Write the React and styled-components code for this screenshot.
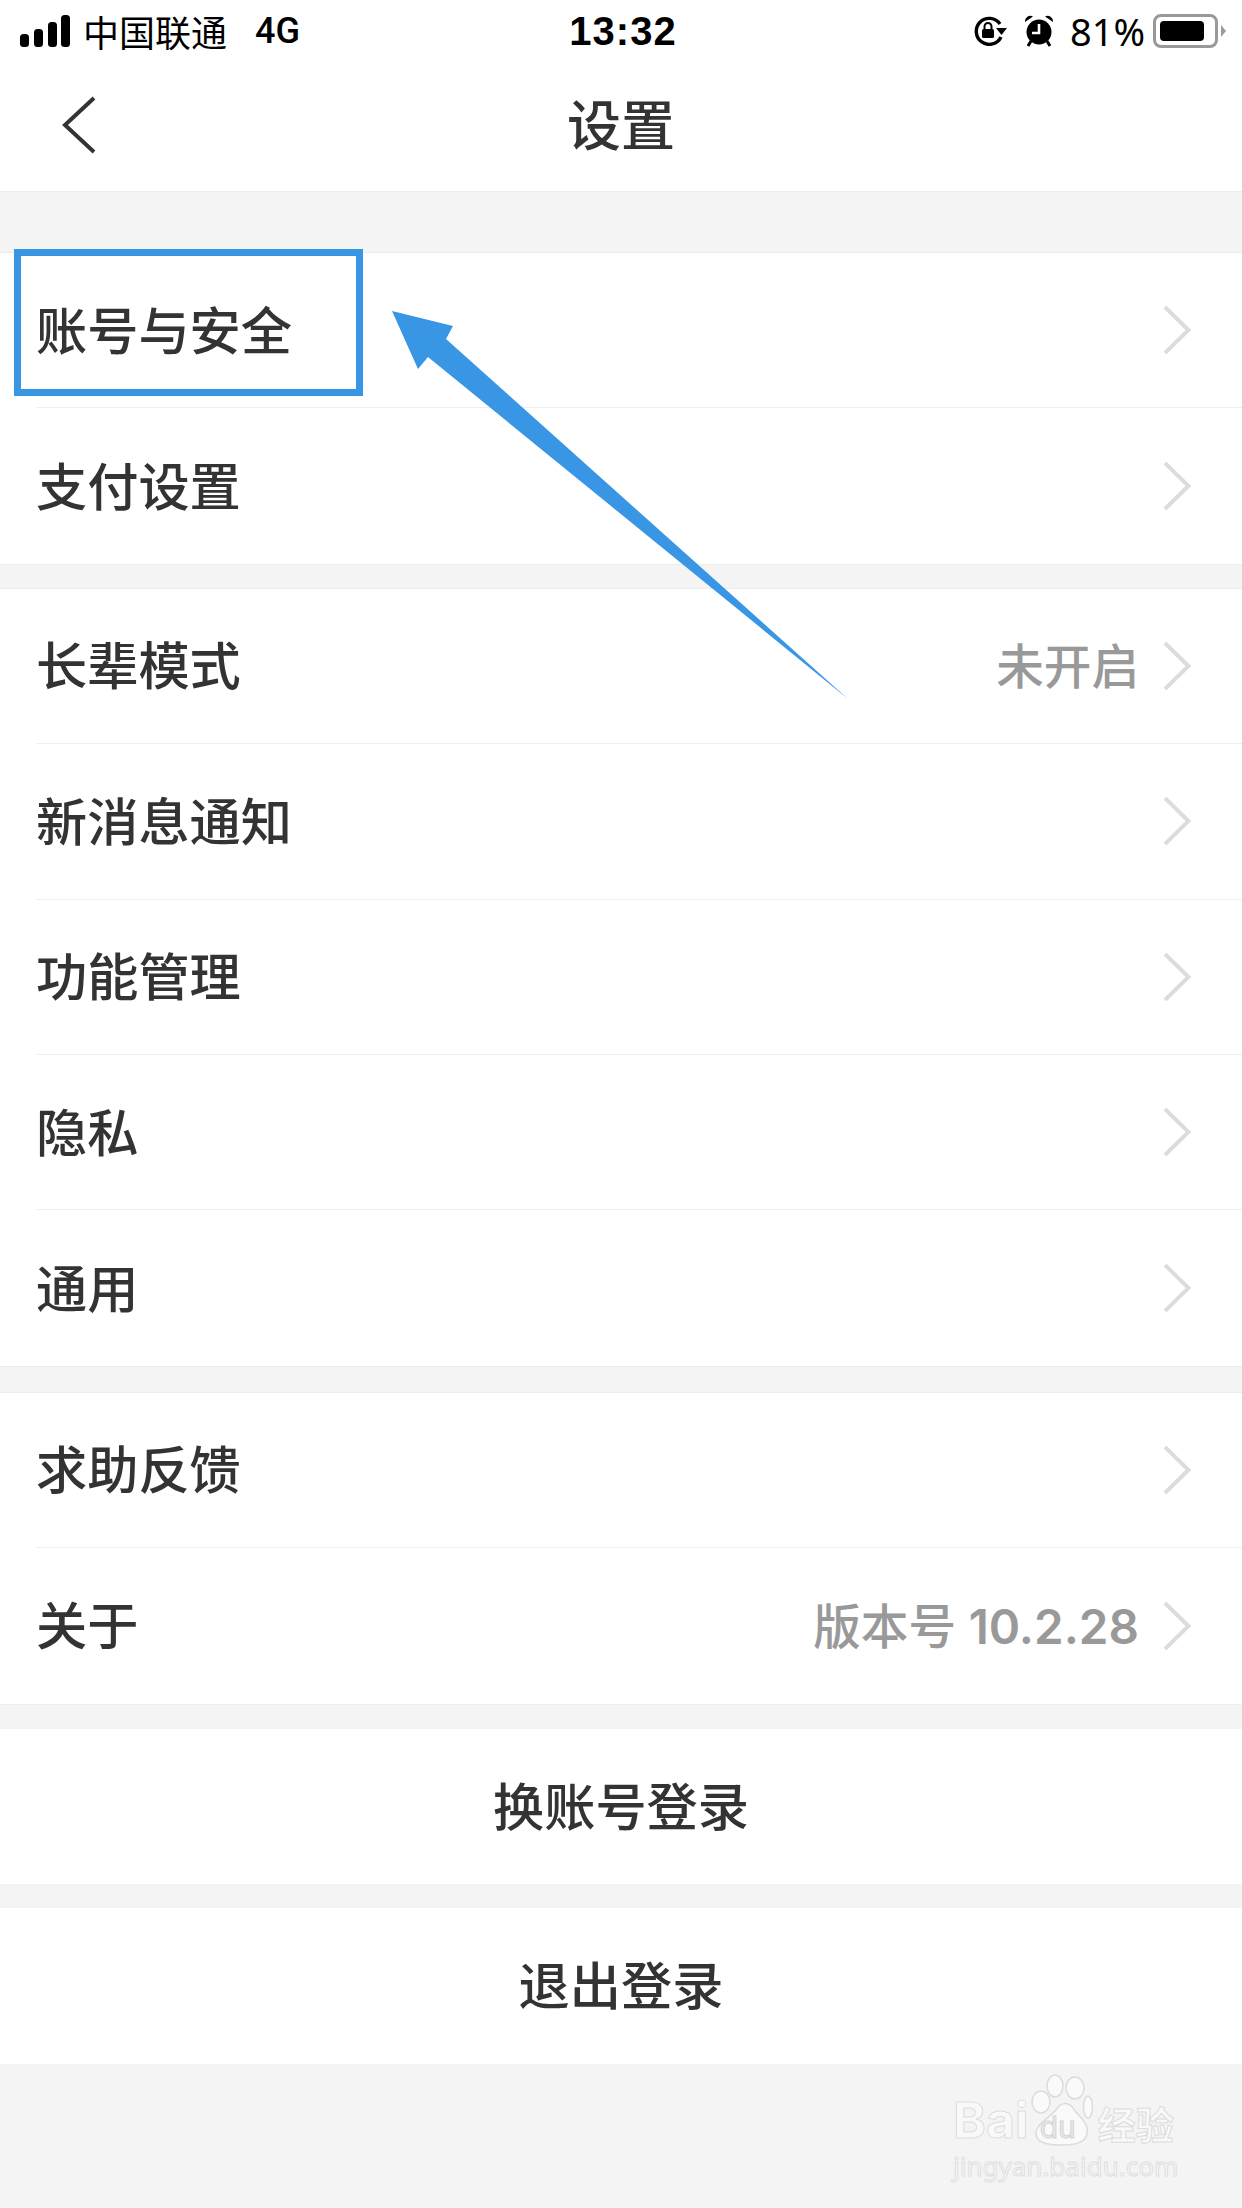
import React from 'react';
import styled, { createGlobalStyle } from 'styled-components';

const GlobalStyle = createGlobalStyle`
    html, body {
        margin: 0;
        padding: 0;
        background: #f4f4f4;
        font-family: "Inter", "Noto Sans CJK SC", sans-serif;
    }
`;

const Page = styled.div`
    position: relative;
    width: 1242px;
    height: 2208px;
    overflow: hidden;
    background: #f4f4f4;
    color: #333;
    font-family: "Inter", "Noto Sans CJK SC", sans-serif;
`;

const Header = styled.header`
    height: 191px;
    background: #fff;
    border-bottom: 1px solid #ededed;
`;

const StatusBar = styled.div`
    display: grid;
    grid-template-columns: 1fr auto 1fr;
    align-items: center;
    height: 62px;
    padding: 0 16px 0 20px;
    color: #000;
`;

const StatusLeft = styled.div`
    display: flex;
    align-items: center;
`;

const Carrier = styled.span`
    margin-left: 13px;
    font-size: 36px;
    line-height: 40px;
    font-family: "Noto Sans CJK SC", sans-serif;
`;

const Network = styled.span`
    margin-left: 28px;
    font-size: 36px;
    font-weight: 500;
    font-family: "Roboto", sans-serif;
`;

const Clock = styled.span`
    font-size: 40px;
    font-weight: 700;
    letter-spacing: 1px;
    font-family: "Liberation Sans", sans-serif;
`;

const StatusRight = styled.div`
    display: flex;
    align-items: center;
    justify-content: flex-end;
`;

const IconGap = styled.span`
    width: 17px;
`;

const Percent = styled.span`
    margin: 0 8px 0 16px;
    font-size: 38px;
    font-family: "Noto Sans", sans-serif;
`;

const BatteryShell = styled.div`
    box-sizing: border-box;
    width: 65px;
    height: 34px;
    padding: 4px;
    border: 3px solid #999;
    border-radius: 8px;
`;

const BatteryLevel = styled.div`
    width: 44px;
    height: 100%;
    background: #000;
    border-radius: 4px;
`;

const BatteryNub = styled.div`
    width: 0;
    height: 0;
    margin-left: 3px;
    border-top: 6px solid transparent;
    border-bottom: 6px solid transparent;
    border-left: 5px solid #999;
`;

const NavBar = styled.div`
    position: relative;
    display: flex;
    align-items: center;
    justify-content: center;
    height: 128px;
`;

const BackButton = styled.svg`
    position: absolute;
    left: 61px;
    top: 34px;
`;

const Title = styled.h1`
    margin: 0 0 8px;
    font-size: 54px;
    font-weight: 500;
    color: #333;
`;

const Group = styled.section`
    margin-top: ${(p) => p.$gap}px;
    background: #fff;
    border-top: 1px solid #ededed;
    border-bottom: 1px solid #ededed;
`;

const Row = styled.div`
    display: flex;
    align-items: center;
    justify-content: space-between;
    box-sizing: border-box;
    height: 155.4px;
    margin-left: 36px;
    padding-right: 51px;
    border-bottom: ${(p) => (p.$last ? 'none' : '1px solid #eeeeee')};
`;

const RowLabel = styled.span`
    padding-bottom: 5px;
    font-size: 51.2px;
    font-weight: 500;
    color: #333;
`;

const RowRight = styled.div`
    display: flex;
    align-items: center;
    gap: 24px;
`;

const RowValue = styled.span`
    padding-bottom: 5px;
    font-size: 47.6px;
    font-weight: 500;
    color: #999;
`;

const VersionNumber = styled.span`
    font-weight: 600;
`;

const ActionButton = styled.div`
    display: flex;
    align-items: center;
    justify-content: center;
    height: ${(p) => p.$height}px;
    margin-top: 24px;
    padding-bottom: 5px;
    box-sizing: border-box;
    background: #fff;
    font-size: 51.2px;
    font-weight: 500;
    color: #333;
`;

const HighlightBox = styled.div`
    position: absolute;
    left: 14px;
    top: 249px;
    box-sizing: border-box;
    width: 349px;
    height: 147px;
    border: 7px solid #3996e5;
`;

const ArrowMark = styled.svg`
    position: absolute;
    left: 392px;
    top: 311px;
`;

const Watermark = styled.div`
    position: absolute;
    left: 953px;
    top: 2074px;
    display: flex;
    flex-direction: column;
    color: #f9f9f9;
`;

const LogoRow = styled.div`
    display: flex;
    align-items: flex-end;
`;

const LogoWord = styled.span`
    font-family: "Inter", sans-serif;
    font-size: 50px;
    line-height: 52px;
    font-weight: 700;
    -webkit-text-stroke: 1px #dcdcdc;
`;

const Paw = styled.div`
    position: relative;
    width: 62px;
    height: 72px;
    margin: 0 2px 0 2px;
`;

const PawLetters = styled.span`
    position: absolute;
    left: 9px;
    bottom: 2px;
    font-family: "Inter", sans-serif;
    font-size: 30px;
    line-height: 34px;
    color: #e9e9e9;
    -webkit-text-stroke: 1px #d4d4d4;
`;

const LogoCn = styled.span`
    margin-left: 3px;
    font-family: "Noto Sans CJK SC", sans-serif;
    font-size: 38px;
    line-height: 46px;
    font-weight: 700;
    -webkit-text-stroke: 1px #dcdcdc;
`;

const WatermarkUrl = styled.span`
    margin-top: 2px;
    font-family: "Noto Sans", sans-serif;
    font-size: 26px;
    line-height: 36px;
    -webkit-text-stroke: 1px #dedede;
`;

const Chevron = () => (
    <svg width="28" height="48" viewBox="0 0 28 48" fill="none">
        <path d="M2 1 L25.5 24 L2 47" stroke="#dcdcdc" strokeWidth="4" />
    </svg>
);

const SignalBars = () => (
    <svg width="50" height="32" viewBox="0 0 50 32" fill="#000">
        <rect x="0" y="19" width="9" height="13" rx="3.5" />
        <rect x="14" y="14" width="9" height="18" rx="3.5" />
        <rect x="28" y="7" width="9" height="25" rx="3.5" />
        <rect x="41" y="0" width="9" height="32" rx="3.5" />
    </svg>
);

const RotationLock = () => (
    <svg width="34" height="30" viewBox="0 0 34 30" fill="none">
        <path d="M27 8 A13 13 0 1 0 28 21" stroke="#000" strokeWidth="3.4" />
        <path d="M23 12 H34 L28.5 19 Z" fill="#000" />
        <rect x="9" y="13" width="12" height="9" rx="1.5" fill="#000" />
        <path d="M11.5 13 V10.5 A3.5 3.5 0 0 1 18.5 10.5 V13" stroke="#000" strokeWidth="2" />
    </svg>
);

const AlarmClock = () => (
    <svg width="30" height="32" viewBox="0 0 30 32" fill="none">
        <path d="M1 7 A5.5 5.5 0 0 1 9 1.5 Z" fill="#000" />
        <path d="M29 7 A5.5 5.5 0 0 0 21 1.5 Z" fill="#000" />
        <circle cx="15" cy="17" r="12.5" fill="#000" />
        <path d="M15 9 V18 H8" stroke="#fff" strokeWidth="2.6" />
        <path d="M7 26 L4 31 M23 26 L26 31" stroke="#000" strokeWidth="3" />
    </svg>
);

const PawPrint = () => (
    <svg width="62" height="72" viewBox="0 0 62 72" fill="#fafafa" stroke="#dcdcdc" strokeWidth="1.5">
        <ellipse cx="10" cy="28" rx="9" ry="11" />
        <ellipse cx="24" cy="12" rx="8" ry="11" />
        <ellipse cx="44" cy="14" rx="9" ry="11" />
        <ellipse cx="57" cy="33" rx="4.5" ry="11" />
        <path d="M28 32 C34 27 40 30 44 37 C50 44 58 50 56 60 C54 69 44 71 30 71 C14 71 4 68 5 58 C6 49 20 44 28 32 Z" />
    </svg>
);

const groups = [
    {
        gap: 60,
        rows: [{ label: '账号与安全' }, { label: '支付设置' }],
    },
    {
        gap: 23,
        rows: [
            { label: '长辈模式', value: '未开启' },
            { label: '新消息通知' },
            { label: '功能管理' },
            { label: '隐私' },
            { label: '通用' },
        ],
    },
    {
        gap: 25,
        rows: [{ label: '求助反馈' }, { label: '关于', value: '版本号 ', version: '10.2.28' }],
    },
];

const App = () => (
    <Page>
        <GlobalStyle />
        <Header>
            <StatusBar>
                <StatusLeft>
                    <SignalBars />
                    <Carrier>中国联通</Carrier>
                    <Network>4G</Network>
                </StatusLeft>
                <Clock>13:32</Clock>
                <StatusRight>
                    <RotationLock />
                    <IconGap />
                    <AlarmClock />
                    <Percent>81%</Percent>
                    <BatteryShell>
                        <BatteryLevel />
                    </BatteryShell>
                    <BatteryNub />
                </StatusRight>
            </StatusBar>
            <NavBar>
                <BackButton width="36" height="58" viewBox="0 0 36 58" fill="none">
                    <path d="M33 2 L4 29 L33 56" stroke="#333" strokeWidth="4" />
                </BackButton>
                <Title>设置</Title>
            </NavBar>
        </Header>

        {groups.map((group) => (
            <Group key={group.rows[0].label} $gap={group.gap}>
                {group.rows.map((row, i) => (
                    <Row key={row.label} $last={i === group.rows.length - 1}>
                        <RowLabel>{row.label}</RowLabel>
                        <RowRight>
                            {row.value && (
                                <RowValue>
                                    {row.value}
                                    {row.version && <VersionNumber>{row.version}</VersionNumber>}
                                </RowValue>
                            )}
                            <Chevron />
                        </RowRight>
                    </Row>
                ))}
            </Group>
        ))}

        <ActionButton $height={155}>换账号登录</ActionButton>
        <ActionButton $height={156}>退出登录</ActionButton>

        <HighlightBox />
        <ArrowMark width="460" height="392" viewBox="392 311 460 392" fill="#3996e5">
            <polygon points="392,311 453,326 446,339 848,699 428,357 418,369" />
        </ArrowMark>

        <Watermark>
            <LogoRow>
                <LogoWord>Bai</LogoWord>
                <Paw>
                    <PawPrint />
                    <PawLetters>du</PawLetters>
                </Paw>
                <LogoCn>经验</LogoCn>
            </LogoRow>
            <WatermarkUrl>jingyan.baidu.com</WatermarkUrl>
        </Watermark>
    </Page>
);

export default App;
